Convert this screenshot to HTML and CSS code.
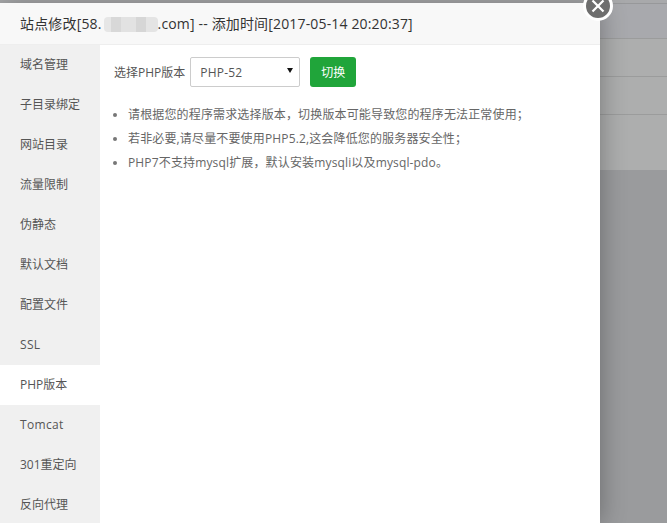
FILE: index.html
```html
<!DOCTYPE html>
<html lang="zh-CN">
<head>
<meta charset="utf-8">
<title>PHP版本</title>
<link rel="stylesheet" href="styles.css">
</head>
<body>
<div class="backdrop">
  <div class="bg-top"></div>
  <div class="bg-row bg-row-first"></div>
  <div class="bg-row"></div>
  <div class="bg-row bg-row-last"></div>
</div>
<div class="modal">
  <button class="close" aria-label="关闭">
    <svg viewBox="0 0 16 16" width="16" height="16"><path d="M2.5 2.5 13.5 13.5M13.5 2.5 2.5 13.5" stroke="#fff" stroke-width="2.2" fill="none"/></svg>
  </button>
  <header class="modal-title">站点修改[58.<span class="blur"></span>.com] -- 添加时间[2017-05-14 20:20:37]</header>
  <div class="modal-body">
    <nav class="side">
      <a>域名管理</a>
      <a>子目录绑定</a>
      <a>网站目录</a>
      <a>流量限制</a>
      <a>伪静态</a>
      <a>默认文档</a>
      <a>配置文件</a>
      <a class="latin">SSL</a>
      <a class="on">PHP版本</a>
      <a class="latin">Tomcat</a>
      <a>301重定向</a>
      <a>反向代理</a>
    </nav>
    <main class="content">
      <div class="form-row">
        <span class="label">选择PHP版本</span>
        <div class="select">PHP-52<span class="caret"></span></div>
        <button class="btn">切换</button>
      </div>
      <ul class="tips">
        <li>请根据您的程序需求选择版本，切换版本可能导致您的程序无法正常使用；</li>
        <li>若非必要,请尽量不要使用PHP5.2,这会降低您的服务器安全性；</li>
        <li>PHP7不支持mysql扩展，默认安装mysqli以及mysql-pdo。</li>
      </ul>
    </main>
  </div>
</div>
</body>
</html>
```
FILE: styles.css
```css
* { box-sizing: border-box; }
html, body { margin: 0; height: 100%; overflow: hidden; }
body {
  position: relative;
  width: 667px;
  height: 523px;
  font-family: "Open Sans", "Noto Sans CJK SC", sans-serif;
  color: #555;
  background: #9a9b9d;
}
.backdrop { display: flex; flex-direction: column; height: 170px; background: #adaeae; }
.bg-top { height: 4px; background: #a8a9ab; border-bottom: 1px solid #97989a; }
.bg-row { height: 38px; background: #adaeae; border-bottom: 1px solid #9b9c9c; flex: none; }
.bg-row-first { height: 35px; background: #a8a9ad; }
.bg-row-last { height: 38px; }
.modal {
  position: absolute;
  left: 0;
  top: 3px;
  width: 600px;
  height: 520px;
  background: #fff;
  box-shadow: 1px 1px 24px rgba(0, 0, 0, .3);
  display: flex;
  flex-direction: column;
}
.modal-title {
  height: 42px;
  flex: none;
  padding-left: 20px;
  font-size: 14px;
  line-height: 42px;
  letter-spacing: .16px;
  color: #333;
  background: #f8f8f8;
  border-bottom: 1px solid #eee;
  white-space: nowrap;
}
.blur {
  display: inline-block;
  width: 54px;
  height: 15px;
  margin-left: 2px;
  vertical-align: -3px;
  border-radius: 4px;
  background: linear-gradient(90deg, #e6e6e6 0 7px, #d8d8d8 7px 17px, #e2e2e2 17px 32px, #d6d6d6 32px 42px, #e4e4e4 42px);
}
.close {
  position: absolute;
  top: -12px;
  right: -13px;
  width: 30px;
  height: 30px;
  padding: 0;
  border: 3px solid #fff;
  border-radius: 50%;
  background: #6e6e6e;
  display: flex;
  align-items: center;
  justify-content: center;
}
.modal-body { display: flex; flex: 1; min-height: 0; }
.side { width: 100px; flex: none; background: #f0f0f0; overflow: hidden; }
.side a {
  display: block;
  height: 40px;
  padding-left: 20px;
  font-size: 12px;
  line-height: 40px;
  color: #555;
}
.side a.latin { letter-spacing: .35px; }
.side a.on { background: #fff; }
.content { flex: 1; padding: 12px 14px; }
.form-row { display: flex; align-items: center; height: 30px; font-size: 12px; }
.label { margin-right: 5px; color: #555; }
.select {
  position: relative;
  width: 110px;
  height: 30px;
  padding-left: 9px;
  line-height: 30px;
  letter-spacing: .2px;
  border: 1px solid #ccc;
  border-radius: 2px;
  color: #555;
}
.caret {
  position: absolute;
  right: 6px;
  top: 10px;
  width: 0;
  height: 0;
  border: 3px solid transparent;
  border-top: 5px solid #111;
  border-bottom: 0;
}
.btn {
  margin-left: 10px;
  width: 46px;
  height: 30px;
  padding: 0;
  border: 0;
  border-radius: 3px;
  background: #20a53a;
  color: #fff;
  font: inherit;
}
.tips { margin: 16px 0 0; padding: 0 0 0 14px; font-size: 12px; letter-spacing: .15px; color: #666; }
.tips li { height: 24px; line-height: 24px; white-space: nowrap; }
.tips li::marker { color: #777; }
```
